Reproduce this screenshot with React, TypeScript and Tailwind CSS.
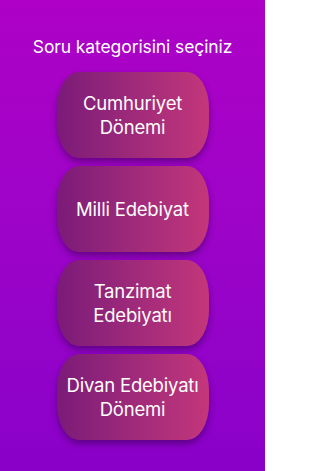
const CATEGORIES = [
  ["Cumhuriyet", "Dönemi"],
  ["Milli Edebiyat"],
  ["Tanzimat", "Edebiyatı"],
  ["Divan Edebiyatı", "Dönemi"],
];

export default function App() {
  return (
    <div
      className="flex h-[471px] w-[265px] flex-col items-center bg-gradient-to-b from-[#ae00c6] to-[#8a00c9] pt-[35px] text-white"
      style={{ fontFamily: "Inter, 'Noto Sans', sans-serif" }}
    >
      <h1 className="text-[17.5px] leading-[24px] font-normal tracking-[-0.1px]">
        Soru kategorisini seçiniz
      </h1>
      <div className="mt-[13px] flex flex-col gap-[8px]">
        {CATEGORIES.map((lines) => (
          <button
            key={lines.join(" ")}
            type="button"
            className="flex h-[86px] w-[152px] flex-col items-center justify-center rounded-[22px/36px] bg-gradient-to-r from-[#7b1a78] to-[#c4367a] text-[18.5px] leading-[24px] tracking-[-0.2px] shadow-[0_4px_6px_rgba(40,0,60,0.45)]"
          >
            {lines.map((l) => (
              <span key={l}>{l}</span>
            ))}
          </button>
        ))}
      </div>
    </div>
  );
}
